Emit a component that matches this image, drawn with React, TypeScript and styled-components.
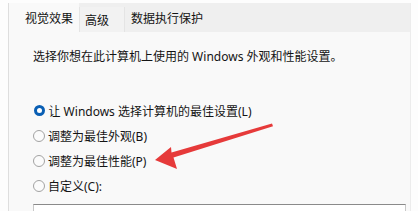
import React from "react";
import styled, { createGlobalStyle } from "styled-components";

const Global = createGlobalStyle`
  html, body { margin: 0; padding: 0; background: #ffffff; }
  body { font-family: "Noto Sans", "Noto Sans CJK SC", sans-serif; color: #141414; }
`;

const Page = styled.div`
  position: relative;
  width: 418px;
  height: 211px;
  overflow: hidden;
  padding: 3px 7px 0 8px;
  box-sizing: border-box;
  background: #fdfdfd;
`;

const Dialog = styled.div`
  display: flex;
  flex-direction: column;
  height: 100%;
  border-left: 1px solid #dedede;
  border-right: 1px solid #ececec;
`;

const TabBar = styled.div`
  display: flex;
  align-items: stretch;
  height: 29px;
  background: #efefef;
  flex-shrink: 0;
`;

const Tab = styled.div<{ $active?: boolean; $w: number; $pl: number; $bordered?: boolean }>`
  width: ${(p) => p.$w}px;
  padding-left: ${(p) => p.$pl}px;
  box-sizing: border-box;
  display: flex;
  align-items: center;
  font-size: 12px;
  line-height: 16px;
  padding-top: 2px;
  background: ${(p) => (p.$active ? "#f9f9f9" : p.$bordered ? "#f2f2f2" : "transparent")};
  border-left: ${(p) => (p.$bordered ? "1px solid #e4e4e4" : "none")};
  border-right: ${(p) => (p.$bordered ? "1px solid #e4e4e4" : "none")};
  margin-top: ${(p) => (p.$bordered ? 4 : 0)}px;
  white-space: nowrap;
`;

const Panel = styled.div`
  flex: 1;
  background: #f9f9f9;
  padding: 17px 0 0 24px;
  display: flex;
  flex-direction: column;
`;

const Desc = styled.div`
  font-size: 12px;
  line-height: 16px;
  white-space: nowrap;
`;

const Options = styled.div`
  margin-top: 33px;
  display: flex;
  flex-direction: column;
`;

const Row = styled.label`
  display: flex;
  align-items: center;
  height: 25px;
  font-size: 12px;
  white-space: nowrap;
  gap: 3px;
`;

const Radio = styled.span<{ $checked?: boolean }>`
  box-sizing: border-box;
  display: inline-block;
  flex-shrink: 0;
  border-radius: 50%;
  ${(p) =>
    p.$checked
      ? `width: 11px; height: 11px; margin: 0 1px 0 0.5px; border: 3px solid #0a5fb4; background: #fff;`
      : `width: 12px; height: 12px; border: 1px solid #a3a3a3; background: #fbfbfb;`}
`;

const ListBox = styled.div`
  margin-top: 6px;
  margin-right: 4px;
  border-top: 1px solid #8a8a8a;
  border-left: 1px solid #c8c8c8;
  border-right: 1px solid #c8c8c8;
  height: 10px;
  background: #fff;
`;

const Arrow = styled.svg`
  position: absolute;
  left: 0;
  top: 0;
  pointer-events: none;
`;

export default function App() {
  return (
    <>
      <Global />
      <Page>
        <Dialog>
          <TabBar>
            <Tab $active $w={70} $pl={16}>视觉效果</Tab>
            <Tab $bordered $w={46} $pl={5}>高级</Tab>
            <Tab $w={90} $pl={6}>数据执行保护</Tab>
          </TabBar>
          <Panel>
            <Desc>选择你想在此计算机上使用的 Windows 外观和性能设置。</Desc>
            <Options>
              <Row><Radio $checked />让 Windows 选择计算机的最佳设置(L)</Row>
              <Row><Radio />调整为最佳外观(B)</Row>
              <Row><Radio />调整为最佳性能(P)</Row>
              <Row><Radio />自定义(C):</Row>
            </Options>
            <ListBox />
          </Panel>
        </Dialog>
        <Arrow width="418" height="211" viewBox="0 0 418 211">
          <polygon
            points="272,123.5 273,126.3 173.5,157.5 177,169 155,160 171,147 171.5,152.5"
            fill="#e63a3a"
          />
        </Arrow>
      </Page>
    </>
  );
}
